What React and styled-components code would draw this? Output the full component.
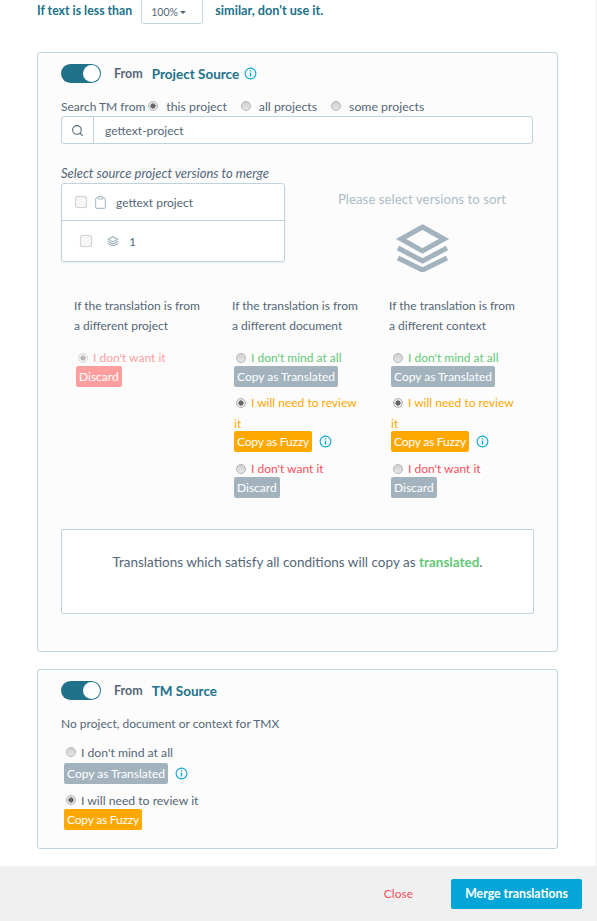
import React from "react";
import styled, { createGlobalStyle } from "styled-components";
import { Search } from "lucide-react";

const GlobalStyle = createGlobalStyle`
  html, body {
    margin: 0;
    padding: 0;
    height: 921px;
    overflow: hidden;
    background: #fff;
  }
  body {
    font-family: "Lato", "Liberation Sans", sans-serif;
    font-size: 12px;
    color: #546677;
  }
  * { box-sizing: border-box; }
`;

const Page = styled.div`
  width: 597px;
  height: 921px;
  display: flex;
  flex-direction: column;
  overflow: hidden;
`;

const Body = styled.div`
  flex: 1;
  padding: 0 38px 0 37px;
  min-height: 0;
  border-right: 1px solid #f0f0f0;
`;

const SimilarRow = styled.div`
  display: flex;
  align-items: center;
  height: 36px;
  margin-top: -8px;
  color: #20718a;
  font-weight: 700;
  font-size: 12.3px;
`;

const SimilarTail = styled.span`
  font-size: 12.7px;
`;

const PercentBox = styled.div`
  align-self: flex-start;
  width: 62px;
  height: 32px;
  margin: 0 12px 0 9px;
  padding: 8px 0 0 9px;
  border: 1px solid #c5d6df;
  border-radius: 3px;
  color: #546677;
  font-weight: 400;
  font-size: 10.5px;
  display: flex;
  align-items: center;
  gap: 2px;
`;

const Caret = styled.span`
  width: 0;
  height: 0;
  margin-top: 1px;
  border-left: 3px solid transparent;
  border-right: 3px solid transparent;
  border-top: 3px solid #546677;
`;

const Panel = styled.section`
  height: ${(p) => p.$height}px;
  margin-top: ${(p) => p.$top}px;
  padding: 11px 23px 0;
  background: #fcfcfc;
  border: 1px solid #bfd3dc;
  border-radius: 3px;
`;

const Head = styled.div`
  display: flex;
  align-items: center;
  height: 19px;
  font-weight: 700;
  font-size: 12.5px;
`;

const Toggle = styled.span`
  position: relative;
  width: 40px;
  height: 19px;
  margin-right: 13px;
  border-radius: 10px;
  background: #20718a;
  &::after {
    content: "";
    position: absolute;
    right: 1px;
    top: 1px;
    width: 17px;
    height: 17px;
    border-radius: 50%;
    background: #fff;
  }
`;

const SourceName = styled.span`
  margin-left: 9px;
  font-size: 13.5px;
  color: #20718a;
`;

const InfoSvg = styled.svg`
  display: block;
  flex: none;
  width: 13px;
  height: 13px;
  margin-left: ${(p) => p.$left}px;
`;

const Info = ({ left }) => (
  <InfoSvg $left={left} viewBox="0 0 13 13" fill="none" stroke="#03a6d7">
    <circle cx="6.5" cy="6.5" r="5.4" strokeWidth="1.1" />
    <path d="M6.5 5.6v4" strokeWidth="1.3" />
    <path d="M6.5 3.2v1.3" strokeWidth="1.3" />
  </InfoSvg>
);

const SearchFrom = styled.div`
  display: flex;
  align-items: center;
  height: 16px;
  margin-top: 15px;
  font-size: 12.3px;
`;

const SearchLead = styled.span`
  font-size: 12px;
`;

const RadioDot = styled.span`
  display: inline-block;
  flex: none;
  width: 10px;
  height: 10px;
  border-radius: 50%;
  border: 1px solid #b4b4b4;
  background: ${(p) =>
    p.$on
      ? "radial-gradient(circle, #666 0 2.3px, #e6e6e6 2.9px)"
      : "linear-gradient(#cfcfcf, #e8e8e8)"};
  opacity: ${(p) => (p.$faded ? 0.45 : 1)};
`;

const SearchOption = styled.span`
  display: flex;
  align-items: center;
  gap: 8px;
  margin-left: ${(p) => p.$left}px;
`;

const SearchBox = styled.div`
  display: flex;
  align-items: center;
  width: 472px;
  height: 28px;
  margin-top: 2px;
  border: 1px solid #bfd3dc;
  border-radius: 3px;
  background: #fff;
`;

const SearchAddon = styled.span`
  display: flex;
  align-items: center;
  justify-content: center;
  width: 32px;
  height: 100%;
  border-right: 1px solid #bfd3dc;
`;

const SearchText = styled.span`
  padding-left: 11px;
`;

const VersionArea = styled.div`
  display: flex;
  height: 97px;
  margin-top: 21px;
`;

const ListColumn = styled.div`
  width: 224px;
`;

const ListCaption = styled.div`
  height: 18px;
  font-style: italic;
  font-size: 13px;
`;

const List = styled.div`
  height: 79px;
  background: #fff;
  border: 1px solid #bfd3dc;
  border-radius: 3px;
  box-shadow: 0 1px 2px rgba(84, 102, 119, 0.12);
`;

const ListRow = styled.div`
  display: flex;
  align-items: center;
  height: ${(p) => p.$height}px;
  padding-left: ${(p) => p.$indent}px;
  & + & {
    border-top: 1px solid #bfd3dc;
  }
`;

const CheckBox = styled.span`
  flex: none;
  width: 12px;
  height: 12px;
  margin-right: ${(p) => p.$gap}px;
  border: 1px solid #d2d2d2;
  border-radius: 3px;
  background: #f6f6f6;
  box-shadow: 0 0 1px rgba(0, 0, 0, 0.2);
`;

const RowText = styled.span`
  margin-left: 10px;
`;

const SortHint = styled.div`
  flex: 1;
  display: flex;
  flex-direction: column;
  align-items: center;
  padding: 26px 0 0 25px;
  color: #aebdc7;
  font-size: 13.3px;
  gap: 17px;
`;

const ClipboardIcon = () => (
  <svg width="11" height="13" viewBox="0 0 11 13" fill="none" stroke="#a9bfcb" strokeWidth="1.1">
    <rect x="0.6" y="1.8" width="9.8" height="10.6" rx="1.6" />
    <rect x="3.2" y="0.6" width="4.6" height="2.4" rx="0.8" fill="#fff" />
  </svg>
);

const LayersSvg = styled.svg`
  flex: none;
`;

const Layers = ({ size, color }) => (
  <LayersSvg width={size} height={(size * 48) / 55} viewBox="0 0 55 48" fill="none" stroke={color}>
    <path d="M27.5 3 L49 15 L27.5 27 L6 15 Z" strokeWidth="5" />
    <path d="M3 24 L27.5 37 L52 24" strokeWidth="5" />
    <path d="M3 34 L27.5 46 L52 34" strokeWidth="5" />
  </LayersSvg>
);

const RuleGrid = styled.div`
  display: grid;
  grid-template-columns: 158px 157px 157px;
  margin-top: 34px;
  padding-left: 13px;
`;

const RuleColumn = styled.div`
  width: 150px;
`;

const RuleTitle = styled.div`
  height: 54px;
  line-height: 20px;
`;

const Option = styled.div`
  margin-bottom: ${(p) => p.$after || 0}px;
  padding-left: 2px;
`;

const OptionLabel = styled.div`
  display: flex;
  align-items: center;
  gap: 5px;
  height: 15px;
  padding-left: 2px;
  color: ${(p) => p.$color};
`;

const WrappedWord = styled.div`
  margin-top: 7px;
  height: 13px;
  line-height: 13px;
  color: #ffa800;
`;

const ActionRow = styled.div`
  display: flex;
  align-items: center;
  margin-top: 1px;
`;

const Tag = styled.span`
  display: inline-block;
  height: 21px;
  line-height: 21px;
  padding: 0 3px;
  border-radius: 2px;
  color: #fff;
  white-space: nowrap;
  letter-spacing: ${(p) => p.$spacing || 0}px;
  background: ${(p) => p.$bg};
`;

const Result = styled.div`
  width: 473px;
  height: 85px;
  margin-top: 31px;
  padding-top: 24px;
  background: #fff;
  border: 1px solid #bfd3dc;
  border-radius: 2px;
  text-align: center;
  font-size: 13.5px;
`;

const ResultWord = styled.b`
  color: #62c876;
`;

const TmNote = styled.div`
  height: 16px;
  margin-top: 16px;
`;

const TmOptions = styled.div`
  margin-top: 12px;
`;

const TmLabel = styled.div`
  display: flex;
  align-items: center;
  gap: 5px;
  height: 16px;
  margin-bottom: ${(p) => p.$after || 0}px;
  padding-left: 2px;
  font-size: 12.2px;
`;

const TmGroup = styled.div`
  margin-bottom: 8px;
  padding-left: 3px;
`;

const Footer = styled.footer`
  display: flex;
  align-items: center;
  justify-content: flex-end;
  flex: none;
  height: 55px;
  padding: 0 15px 0 0;
  background: #f0f0f0;
`;

const CloseLink = styled.span`
  margin-right: 38px;
  color: #fb4f5c;
`;

const MergeButton = styled.button`
  width: 131px;
  height: 30px;
  border: none;
  border-radius: 2px;
  background: #03a6d7;
  color: #fff;
  font-family: inherit;
  font-weight: 700;
  font-size: 12.3px;
`;

const GREEN = "#62c876";
const ORANGE = "#ffa800";
const RED = "#fb4f5c";
const GREY = "#a2b3be";

function DocumentRules({ title }) {
  return (
    <RuleColumn>
      <RuleTitle>If the translation is from<br />{title}</RuleTitle>
      <Option $after={8}>
        <OptionLabel $color={GREEN}><RadioDot />I don't mind at all</OptionLabel>
        <ActionRow><Tag $bg={GREY}>Copy as Translated</Tag></ActionRow>
      </Option>
      <Option $after={9}>
        <OptionLabel $color={ORANGE}><RadioDot $on />I will need to review</OptionLabel>
        <WrappedWord>it</WrappedWord>
        <ActionRow><Tag $bg={ORANGE} $spacing={-0.2}>Copy as Fuzzy</Tag><Info left={7} /></ActionRow>
      </Option>
      <Option>
        <OptionLabel $color={RED}><RadioDot />I don't want it</OptionLabel>
        <ActionRow><Tag $bg={GREY}>Discard</Tag></ActionRow>
      </Option>
    </RuleColumn>
  );
}

export default function App() {
  return (
    <Page>
      <GlobalStyle />
      <Body>
        <SimilarRow>
          If text is less than
          <PercentBox>100%<Caret /></PercentBox>
          <SimilarTail>similar, don't use it.</SimilarTail>
        </SimilarRow>

        <Panel $height={600} $top={24}>
          <Head>
            <Toggle />
            From
            <SourceName>Project Source</SourceName>
            <Info left={5} />
          </Head>
          <SearchFrom>
            <SearchLead>Search TM from</SearchLead>
            <SearchOption $left={3}><RadioDot $on />this project</SearchOption>
            <SearchOption $left={14}><RadioDot />all projects</SearchOption>
            <SearchOption $left={14}><RadioDot />some projects</SearchOption>
          </SearchFrom>
          <SearchBox>
            <SearchAddon><Search size={13} color="#546677" /></SearchAddon>
            <SearchText>gettext-project</SearchText>
          </SearchBox>

          <VersionArea>
            <ListColumn>
              <ListCaption>Select source project versions to merge</ListCaption>
              <List>
                <ListRow $height={36} $indent={13}>
                  <CheckBox $gap={8} />
                  <ClipboardIcon />
                  <RowText>gettext project</RowText>
                </ListRow>
                <ListRow $height={41} $indent={18}>
                  <CheckBox $gap={15} />
                  <Layers size={12} color="#a2b3be" />
                  <RowText>1</RowText>
                </ListRow>
              </List>
            </ListColumn>
            <SortHint>
              Please select versions to sort
              <Layers size={55} color="#a2b3be" />
            </SortHint>
          </VersionArea>

          <RuleGrid>
            <RuleColumn>
              <RuleTitle>If the translation is from<br />a different project</RuleTitle>
              <Option>
                <OptionLabel $color="#ff9e9e"><RadioDot $on $faded />I don't want it</OptionLabel>
                <ActionRow><Tag $bg="#ff9e9e">Discard</Tag></ActionRow>
              </Option>
            </RuleColumn>
            <DocumentRules title="a different document" />
            <DocumentRules title="a different context" />
          </RuleGrid>

          <Result>
            Translations which satisfy all conditions will copy as <ResultWord>translated</ResultWord>.
          </Result>
        </Panel>

        <Panel $height={180} $top={17}>
          <Head>
            <Toggle />
            From
            <SourceName>TM Source</SourceName>
          </Head>
          <TmNote>No project, document or context for TMX</TmNote>
          <TmOptions>
            <TmGroup>
              <TmLabel $after={3}><RadioDot />I don't mind at all</TmLabel>
              <ActionRow><Tag $bg={GREY}>Copy as Translated</Tag><Info left={7} /></ActionRow>
            </TmGroup>
            <TmGroup>
              <TmLabel><RadioDot $on />I will need to review it</TmLabel>
              <ActionRow><Tag $bg={ORANGE} $spacing={-0.2}>Copy as Fuzzy</Tag></ActionRow>
            </TmGroup>
          </TmOptions>
        </Panel>
      </Body>
      <Footer>
        <CloseLink>Close</CloseLink>
        <MergeButton>Merge translations</MergeButton>
      </Footer>
    </Page>
  );
}
